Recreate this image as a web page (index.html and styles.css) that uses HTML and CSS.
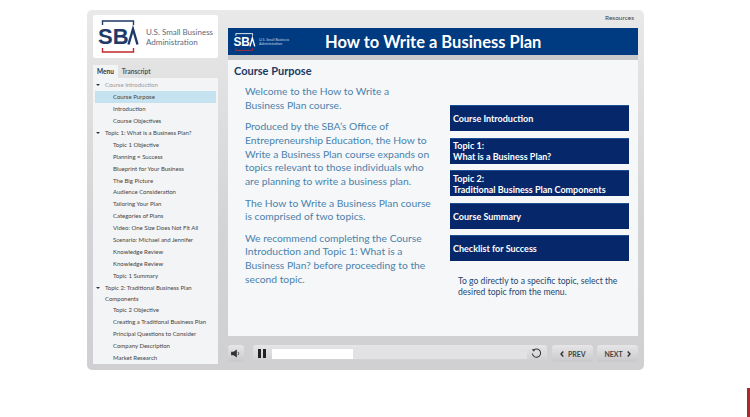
FILE: index.html
```html
<!DOCTYPE html>
<html>
<head>
  <title>How to Write a Business Plan</title>
  <link rel="stylesheet" href="styles.css">
</head>
<body>
  <div class="player">
    <div class="sidebar">
      <div class="logo-box">
        <svg class="sba-logo" width="41" height="37" viewBox="0 0 41 37">
          <path d="M4.500 7V3H35.500V7" fill="none" stroke="#1f3a68" stroke-width="1.4"/>
          <path d="M4.500 30V34H35.500V30" fill="none" stroke="#c0282d" stroke-width="1.4"/>
          <text x="0" y="26" class="sba-text">SB</text>
          <path d="M30.500 26.500L35 11L39.500 26.500" fill="none" stroke="#1f3a68" stroke-width="2.400"/>
        </svg>
        <div class="logo-name">U.S. Small Business Administration</div>
      </div>
      <div class="tabs">
        <div class="tab active">Menu</div>
        <div class="tab">Transcript</div>
      </div>
      <div class="menu">
        <div class="topic muted"><span class="arrow"></span>Course Introduction</div>
        <div class="item selected">Course Purpose</div>
        <div class="item">Introduction</div>
        <div class="item">Course Objectives</div>
        <div class="topic"><span class="arrow"></span>Topic 1: What is a Business Plan?</div>
        <div class="item">Topic 1 Objective</div>
        <div class="item">Planning = Success</div>
        <div class="item">Blueprint for Your Business</div>
        <div class="item">The Big Picture</div>
        <div class="item">Audience Consideration</div>
        <div class="item">Tailoring Your Plan</div>
        <div class="item">Categories of Plans</div>
        <div class="item">Video: One Size Does Not Fit All</div>
        <div class="item">Scenario: Michael and Jennifer</div>
        <div class="item">Knowledge Review</div>
        <div class="item">Knowledge Review</div>
        <div class="item">Topic 1 Summary</div>
        <div class="topic two-line"><span class="arrow"></span>Topic 2: Traditional Business Plan Components</div>
        <div class="item">Topic 2 Objective</div>
        <div class="item">Creating a Traditional Business Plan</div>
        <div class="item">Principal Questions to Consider</div>
        <div class="item">Company Description</div>
        <div class="item">Market Research</div>
      </div>
    </div>

    <div class="main">
      <div class="resources">Resources</div>
      <div class="banner">
        <div class="banner-logo">
          <svg width="23" height="20" viewBox="0 0 41 37">
            <path d="M4.500 7V3H35.500V7" fill="none" stroke="#fff" stroke-width="1.600"/>
            <path d="M4.500 30V34H35.500V30" fill="none" stroke="#c0282d" stroke-width="1.600"/>
            <text x="0" y="26" class="sba-text light">SB</text>
            <path d="M30.500 26.500L35 11L39.500 26.500" fill="none" stroke="#fff" stroke-width="2.600"/>
          </svg>
          <div class="banner-name">U.S. Small Business Administration</div>
        </div>
        <h1>How to Write a Business Plan</h1>
      </div>
      <div class="slide">
        <h2>Course Purpose</h2>
        <div class="columns">
          <div class="copy">
            <p>Welcome to the How to Write a Business Plan course.</p>
            <p>Produced by the SBA’s Office of Entrepreneurship Education, the How to Write a Business Plan course expands on topics relevant to those individuals who are planning to write a business plan.</p>
            <p>The How to Write a Business Plan course is comprised of two topics.</p>
            <p>We recommend completing the Course Introduction and Topic 1: What is a Business Plan? before proceeding to the second topic.</p>
          </div>
          <div class="links">
            <div class="link">Course Introduction</div>
            <div class="link">Topic 1:<br>What is a Business Plan?</div>
            <div class="link">Topic 2:<br>Traditional Business Plan Components</div>
            <div class="link">Course Summary</div>
            <div class="link">Checklist for Success</div>
            <div class="hint">To go directly to a specific topic, select the desired topic from the menu.</div>
          </div>
        </div>
      </div>
      <div class="controls">
        <div class="btn small">
          <svg width="10" height="9" viewBox="0 0 12 11">
            <path d="M0 3.500H3L7 0.500V10.500L3 7.500H0Z" fill="#333"/>
            <path d="M8.500 3.500Q10 5.500 8.500 7.500" fill="none" stroke="#333"/>
          </svg>
        </div>
        <div class="seek">
          <div class="pause"><span></span><span></span></div>
          <div class="track"><div class="fill"></div></div>
          <svg class="replay" width="11" height="11" viewBox="0 0 12 12">
            <path d="M3 2.200A4.500 4.500 0 1 1 1.500 6" fill="none" stroke="#333" stroke-width="1.100"/>
            <path d="M0.800 1.500L4.200 1L3.400 4Z" fill="#333"/>
          </svg>
        </div>
        <div class="btn nav prev">
          <svg class="chev" width="4" height="6" viewBox="0 0 4 6"><path d="M3.300 0.500L1 3L3.300 5.500" fill="none" stroke="#333" stroke-width="1.400"/></svg>
          PREV
        </div>
        <div class="btn nav next">
          NEXT
          <svg class="chev" width="4" height="6" viewBox="0 0 4 6"><path d="M0.700 0.500L3 3L0.700 5.500" fill="none" stroke="#333" stroke-width="1.400"/></svg>
        </div>
      </div>
    </div>
  </div>
  <div class="corner"></div>
</body>
</html>
```

FILE: styles.css
```css
* {
  box-sizing: border-box;
}

html, body {
  height: 100%;
}

body {
  margin: 0;
  padding: 10px 0 0 87px;
  background-color: #fff;
  font-family: Lato, sans-serif;
  overflow: hidden;
}

.player {
  display: flex;
  width: 557px;
  height: 360px;
  gap: 10px;
  padding: 5px 6px 6px 6px;
  border-radius: 5px;
  background: linear-gradient(#e9e9e9, #e4e4e4 12%, #d4d4d6 60%, #d0d0d2);
}

/* Left column */
.sidebar {
  display: flex;
  flex-direction: column;
  width: 125px;
}

.logo-box {
  display: flex;
  align-items: center;
  gap: 7px;
  height: 43px;
  padding-left: 5px;
  border-radius: 2px;
  background-color: #fff;
}

.sba-logo {
  flex: none;
}

.sba-text {
  font-family: "Liberation Sans", sans-serif;
  font-size: 22px;
  font-weight: bold;
  fill: #1f3a68;
}

.sba-text.light {
  fill: #fff;
}

.logo-name {
  width: 72px;
  font-size: 8px;
  line-height: 10px;
  color: #5c6a80;
}

.tabs {
  display: flex;
  margin-top: 7px;
  height: 13px;
}

.tab {
  padding: 0 4px;
  font-size: 6.500px;
  font-weight: bold;
  line-height: 13px;
  color: #555;
}

.tab.active {
  background-color: #f3f4f6;
  color: #333;
}

.menu {
  flex: 1;
  padding-top: 1px;
  background-color: #f3f4f6;
  overflow: hidden;
  font-size: 6px;
  color: #444;
}

.item {
  height: 11.950px;
  margin-left: 2px;
  margin-right: 2px;
  padding-left: 18px;
  line-height: 11.950px;
}

.item.selected {
  background-color: #c4e2f0;
}

.topic {
  position: relative;
  height: 11.950px;
  padding-left: 12px;
  line-height: 11.950px;
}

.topic.two-line {
  height: 22.500px;
  line-height: 11px;
}

.topic.muted {
  color: #999;
}

.arrow {
  position: absolute;
  left: 3px;
  top: 5px;
  border-left: 2px solid transparent;
  border-right: 2px solid transparent;
  border-top: 2.500px solid #333;
}

/* Right column */
.main {
  display: flex;
  flex-direction: column;
  width: 410px;
}

.resources {
  height: 13px;
  padding-right: 4px;
  font-size: 6.500px;
  line-height: 6px;
  text-align: right;
  color: #444;
}

.banner {
  display: flex;
  align-items: center;
  height: 27px;
  background-color: #003a80;
}

.banner-logo {
  display: flex;
  align-items: center;
  gap: 3px;
  width: 97px;
  padding-left: 5px;
}

.banner-name {
  width: 36px;
  font-size: 3.600px;
  line-height: 4px;
  color: #c5d3e6;
}

h1 {
  margin: 0;
  font-size: 16.500px;
  font-weight: bold;
  color: #fff;
}

.slide {
  display: flex;
  flex-direction: column;
  height: 281px;
  border-top: 5px solid #c9c9cb;
  padding: 4px 9px 0 6px;
  background-color: #f6f7f9;
}

h2 {
  margin: 0;
  font-size: 11px;
  font-weight: bold;
  line-height: 14px;
  color: #1b3a63;
}

.columns {
  display: flex;
  justify-content: space-between;
  padding-top: 7px;
}

.copy {
  width: 186px;
  margin-left: 11px;
  font-size: 10.300px;
  line-height: 13.700px;
  color: #4a82ab;
}

.copy p {
  margin: 0 0 7.800px 0;
}

.links {
  display: flex;
  flex-direction: column;
  gap: 6.500px;
  width: 179px;
  padding-top: 20px;
}

.link {
  display: flex;
  align-items: center;
  height: 26px;
  padding: 0 3px;
  border-top: 1px solid #1d4f94;
  background-color: #06276a;
  font-size: 9px;
  font-weight: bold;
  line-height: 11px;
  color: #fff;
}

.hint {
  margin-top: 8px;
  padding-left: 8px;
  font-size: 8.600px;
  line-height: 11.500px;
  color: #26466e;
}

.controls {
  display: flex;
  align-items: center;
  margin-top: 9px;
  height: 17px;
}

.btn {
  display: flex;
  align-items: center;
  justify-content: center;
  height: 17px;
  border-radius: 3px;
  background: linear-gradient(#e6e6e8, #c9c9cb);
  font-size: 7px;
  font-weight: bold;
  color: #444;
}

.btn.small {
  width: 16px;
}

.seek {
  display: flex;
  align-items: center;
  width: 296px;
  height: 17px;
  margin: 0 5px 0 9px;
  padding-left: 5px;
  border-radius: 3px;
  background: linear-gradient(#e6e6e8, #cfcfd1);
}

.pause {
  display: flex;
  gap: 2px;
  margin-right: 6px;
}

.pause span {
  width: 3px;
  height: 9px;
  background-color: #222;
}

.track {
  width: 255px;
  height: 10px;
  border-radius: 1px;
  background-color: #e2e2e4;
}

.fill {
  width: 81px;
  height: 100%;
  background-color: #fff;
}

.replay {
  margin-left: 4px;
}

.nav {
  width: 41px;
  gap: 4px;
}

.next {
  margin-left: 4px;
}

.chev {
  flex: none;
}

/* Sliver of another element at the window edge */
.corner {
  position: fixed;
  right: 0;
  bottom: 0;
  width: 3px;
  height: 29px;
  background-color: #a82a2a;
}
```
